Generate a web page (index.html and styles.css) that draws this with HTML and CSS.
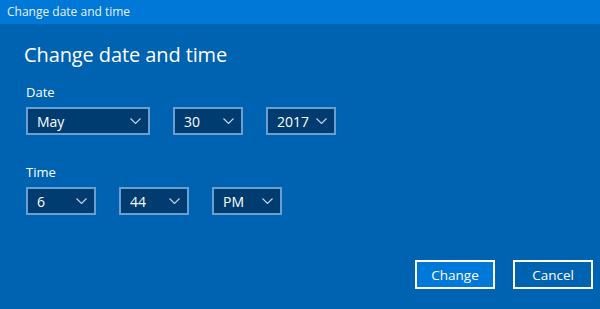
FILE: index.html
```html
<!DOCTYPE html>
<html lang="en">
<head>
  <meta charset="UTF-8">
  <meta name="viewport" content="width=device-width, initial-scale=1.0">
  <title>Change date and time</title>
  <link rel="stylesheet" href="styles.css">
</head>
<body>
  <div class="titlebar">Change date and time</div>
  <div class="content">
    <h1>Change date and time</h1>

    <div class="label">Date</div>
    <div class="row">
      <div class="select wide"><span>May</span><svg class="chev" viewBox="0 0 11 6"><path d="M0.5 0.5 L5.5 5.5 L10.5 0.5"/></svg></div>
      <div class="select"><span>30</span><svg class="chev" viewBox="0 0 11 6"><path d="M0.5 0.5 L5.5 5.5 L10.5 0.5"/></svg></div>
      <div class="select"><span>2017</span><svg class="chev" viewBox="0 0 11 6"><path d="M0.5 0.5 L5.5 5.5 L10.5 0.5"/></svg></div>
    </div>

    <div class="label time">Time</div>
    <div class="row">
      <div class="select"><span>6</span><svg class="chev" viewBox="0 0 11 6"><path d="M0.5 0.5 L5.5 5.5 L10.5 0.5"/></svg></div>
      <div class="select"><span>44</span><svg class="chev" viewBox="0 0 11 6"><path d="M0.5 0.5 L5.5 5.5 L10.5 0.5"/></svg></div>
      <div class="select"><span>PM</span><svg class="chev" viewBox="0 0 11 6"><path d="M0.5 0.5 L5.5 5.5 L10.5 0.5"/></svg></div>
    </div>
  </div>
  <div class="buttons">
    <button class="btn primary">Change</button>
    <button class="btn">Cancel</button>
  </div>
</body>
</html>
```

FILE: styles.css
```css
html, body { margin: 0; padding: 0; }
body { width: 600px; height: 309px; background: #0063b1; color: #fff; font-family: "Open Sans", "Noto Sans", sans-serif; overflow: hidden; }
.titlebar { height: 24px; line-height: 23px; background: #0078d7; font-size: 12px; padding: 0 7px; color: #e8f1fb; }
.content { padding: 0 24px 0 26px; }
h1 { font-size: 20px; font-weight: 400; margin: 17px 0 0 -2px; line-height: 28px; letter-spacing: -0.1px; }
.label { font-size: 13px; line-height: 18px; margin-top: 14px; }
.label.time { margin-top: 28px; }
.row { display: flex; gap: 23px; margin-top: 6px; }
.select { box-sizing: border-box; width: 70px; height: 28px; border: 2px solid #6a9fd4; background: #003c70; display: flex; align-items: center; justify-content: space-between; padding: 0 7px 0 9px; font-size: 14px; }
.select.wide { width: 124px; }
.chev { width: 11px; height: 6px; fill: none; stroke: #c6d9ec; stroke-width: 1.1; }
.buttons { display: flex; justify-content: flex-end; gap: 18px; padding-right: 7px; margin-top: 45px; }
.btn { box-sizing: border-box; width: 80px; height: 29px; border: 2px solid #fff; background: transparent; color: #fff; font-family: "Open Sans", "Noto Sans", sans-serif; font-size: 13.5px; padding: 0; }
.btn.primary { background: #0078d7; }
```
